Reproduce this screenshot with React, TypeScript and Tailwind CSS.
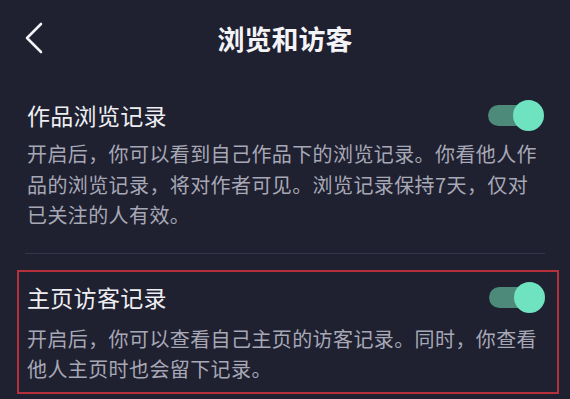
function Toggle() {
    return (
        <div className="relative w-[56px] h-[31px] shrink-0">
            <div className="absolute left-0 top-[5px] w-[40px] h-[21px] rounded-full bg-[#4e8a7a]" />
            <div className="absolute right-0 top-0 w-[31px] h-[31px] rounded-full bg-[#6fe2c0]" />
        </div>
    )
}

function BackIcon() {
    return (
        <svg width="20" height="32" viewBox="0 0 20 32" fill="none">
            <polyline
                points="17,2 3,16 17,30"
                stroke="#f2f2f5"
                strokeWidth="2.6"
                strokeLinecap="round"
                strokeLinejoin="round"
            />
        </svg>
    )
}

export default function App() {
    return (
        <div
            className="w-[570px] h-[399px] overflow-hidden bg-[#1f2030] text-white"
            style={{ fontFamily: '"Noto Sans CJK SC", "Noto Sans", sans-serif' }}
        >
            {/* header */}
            <div className="grid grid-cols-[1fr_auto_1fr] items-center h-[76px]">
                <div className="pl-[24px] flex items-center">
                    <BackIcon />
                </div>
                <h1 className="text-[27px] font-bold leading-none text-[#f4f4f7]">浏览和访客</h1>
                <div />
            </div>

            {/* works browsing */}
            <div className="pt-[21px] pl-[27px] pr-[26px]">
                <div className="flex items-center justify-between h-[36px]">
                    <p className="text-[23px] tracking-[0.3px] text-[#eeeef2]">作品浏览记录</p>
                    <Toggle />
                </div>
                <p className="mt-[6px] text-[20px] leading-[30.5px] tracking-[0.4px] text-[#a7a8b6] whitespace-nowrap">
                    开启后，你可以看到自己作品下的浏览记录。你看他人作
                    <br />
                    品的浏览记录，将对作者可见。浏览记录保持7天，仅对
                    <br />
                    已关注的人有效。
                </p>
            </div>

            <div className="mx-[25px] mt-[22px] h-px bg-[#33354a]" />

            {/* homepage visitors */}
            <div className="ml-[17px] mr-[11px] mt-[16px] border-2 border-[#b5303b] pt-[8px] pb-[8px] pl-[8px] pr-[12px]">
                <div className="flex items-center justify-between h-[36px]">
                    <p className="text-[23px] tracking-[0.3px] text-[#eeeef2]">主页访客记录</p>
                    <Toggle />
                </div>
                <p className="mt-[8px] text-[20px] leading-[30px] tracking-[0.4px] text-[#a7a8b6] whitespace-nowrap">
                    开启后，你可以查看自己主页的访客记录。同时，你查看
                    <br />
                    他人主页时也会留下记录。
                </p>
            </div>
        </div>
    )
}
